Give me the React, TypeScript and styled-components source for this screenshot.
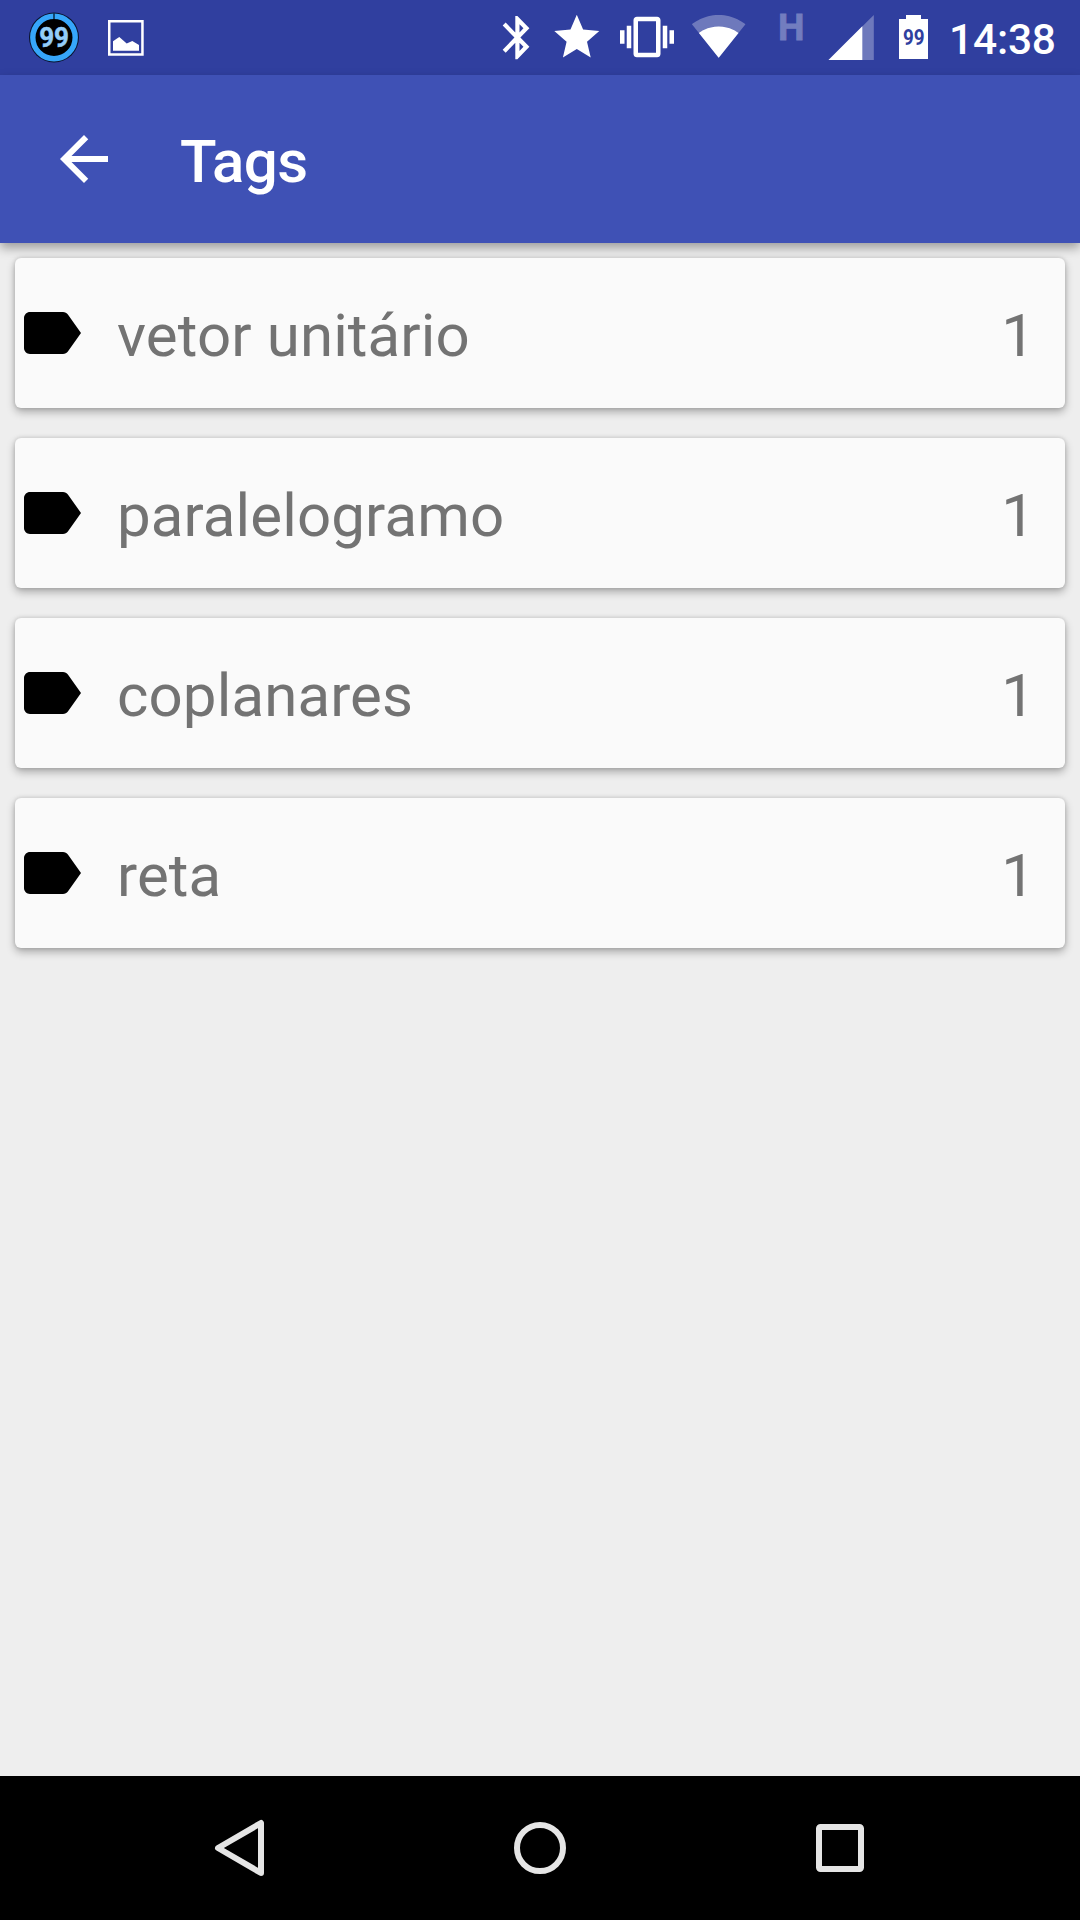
import React from "react";
import styled, { createGlobalStyle } from "styled-components";

const Global = createGlobalStyle`
  body { margin: 0; background: #eeeeee; }
  * { box-sizing: border-box; }
`;

const Screen = styled.div`
  width: 1080px;
  height: 1920px;
  display: flex;
  flex-direction: column;
  background: #eeeeee;
  font-family: Roboto, "Noto Sans", sans-serif;
  overflow: hidden;
`;

const StatusBar = styled.header`
  height: 75px;
  flex: none;
  display: flex;
  align-items: flex-start;
  background: #303f9f;
`;

const StatusIcon = styled.svg<{ $before: number }>`
  display: block;
  flex: none;
  height: 75px;
  margin-left: ${(p) => p.$before}px;
  fill: #ffffff;
`;

const NetworkType = styled.span`
  width: 28px;
  margin-left: 31px;
  padding-top: 5px;
  font-size: 37.5px;
  line-height: 44px;
  font-weight: 700;
  color: #727dbf;
  -webkit-text-stroke: 0.8px #727dbf;
`;

const Clock = styled.time`
  margin-left: 20px;
  padding-top: 15px;
  font-size: 42.5px;
  line-height: 49px;
  letter-spacing: -0.2px;
  font-weight: 500;
  color: #ffffff;
`;

const AppBar = styled.div`
  height: 168px;
  flex: none;
  display: flex;
  align-items: center;
  gap: 60px;
  padding-left: 48px;
  background: #3f51b5;
  box-shadow: 0 5px 10px rgba(0, 0, 0, 0.34);
`;

const BackButton = styled.button`
  display: block;
  width: 72px;
  height: 72px;
  padding: 0;
  border: 0;
  background: none;
`;

const Title = styled.h1`
  margin: 0;
  padding-top: 5px;
  font-size: 60px;
  line-height: 71px;
  letter-spacing: -0.6px;
  font-weight: 500;
  color: #ffffff;
`;

const TagList = styled.ul`
  flex: 1;
  display: flex;
  flex-direction: column;
  gap: 30px;
  margin: 0;
  padding: 15px;
  list-style: none;
`;

const TagCard = styled.li`
  height: 150px;
  display: flex;
  align-items: center;
  padding-right: 30px;
  border-radius: 6px;
  background: #fafafa;
  box-shadow: 0 4px 8px rgba(0, 0, 0, 0.29), 0 0 4px rgba(0, 0, 0, 0.15);
`;

const TagText = styled.span<{ $grow?: boolean }>`
  flex: ${(p) => (p.$grow ? "1" : "none")};
  margin-left: ${(p) => (p.$grow ? "30px" : "0")};
  padding-top: 5px;
  font-size: 60px;
  line-height: 71px;
  letter-spacing: ${(p) => (p.$grow ? "0.12px" : "0")};
  color: #737373;
`;

const NavBar = styled.nav`
  height: 144px;
  flex: none;
  display: flex;
  padding: 0 90px;
  background: #000000;
`;

const NavButton = styled.button`
  flex: 1;
  display: flex;
  align-items: center;
  justify-content: center;
  padding: 0;
  border: 0;
  background: none;

  svg {
    fill: none;
    stroke: #e5e5e5;
    stroke-width: 6;
    stroke-linejoin: round;
  }
`;

const tags = [
  { name: "vetor unitário", count: 1 },
  { name: "paralelogramo", count: 1 },
  { name: "coplanares", count: 1 },
  { name: "reta", count: 1 },
];

const LabelIcon = () => (
  <svg width="72" height="72" viewBox="0 0 24 24">
    <path d="M17.63 5.84C17.27 5.33 16.67 5 16 5L5 5.01C3.9 5.01 3 5.9 3 7v10c0 1.1.9 1.99 2 1.99L16 19c.67 0 1.27-.33 1.63-.84L22 12l-4.37-6.16z" />
  </svg>
);

const StatusIcons = () => (
  <>
    <StatusIcon $before={29} width="50" viewBox="29 0 50 75">
      <circle cx="54" cy="37.5" r="25" fill="#0a1430" />
      <circle cx="54" cy="37.5" r="18.8" fill="#000000" />
      <circle cx="54" cy="37.5" r="21.2" fill="none" stroke="#36a6fa" strokeWidth="5.4" />
      <path d="M54 13v6" stroke="#0d3050" strokeWidth="1.6" />
      <text x="39.2" y="47.4" fontSize="27.5" fontWeight="700" fill="#93cdf9" stroke="#93cdf9" strokeWidth="0.5" textLength="29.8" lengthAdjust="spacingAndGlyphs">99</text>
    </StatusIcon>
    <StatusIcon $before={29} width="36" viewBox="108 0 36 75">
      <path d="M109.25 21.25h33.2v33.2h-33.2z" fill="none" stroke="#ffffff" strokeWidth="2.5" />
      <path d="M113 50.7V41.2l4-2.6 2.3-1.6 7.4 6.4 5.6-2.4 6.7 4v5.7z" />
    </StatusIcon>
    <StatusIcon $before={358} width="28" viewBox="502 0 28 75">
      <path
        transform="translate(502.7 16) scale(2.1 2.16) translate(-5 -2)"
        d="M17.71 7.71L12 2h-1v7.59L6.41 5 5 6.41 10.59 12 5 17.59 6.41 19 11 14.41V22h1l5.71-5.71-4.3-4.29 4.3-4.29zM13 5.83l1.88 1.88L13 9.59V5.83zm1.88 10.46L13 18.17v-3.76l1.88 1.88z"
      />
    </StatusIcon>
    <StatusIcon $before={24} width="46" viewBox="554 0 46 75">
      <path
        transform="translate(549.8 10.2) scale(2.25)"
        d="M12 17.27L18.18 21l-1.64-7.03L22 9.24l-7.19-.61L12 2 9.19 8.63 2 9.24l5.46 4.73L5.82 21z"
      />
    </StatusIcon>
    <StatusIcon $before={20} width="54" viewBox="620 0 54 75">
      <path
        transform="translate(620 10.1) scale(2.25)"
        d="M0 15h2V9H0v6zm3 2h2V7H3v10zm19-8v6h2V9h-2zm-3 8h2V7h-2v10zM16.5 3h-9C6.67 3 6 3.67 6 4.5v15c0 .83.67 1.5 1.5 1.5h9c.83 0 1.5-.67 1.5-1.5v-15c0-.83-.67-1.5-1.5-1.5zM16 19H8V5h8v14z"
      />
    </StatusIcon>
    <StatusIcon $before={17} width="56" viewBox="691 0 56 75">
      <g transform="translate(691.1 8.2) scale(2.3)">
        <path opacity="0.3" d="M12.01 21.49L23.64 7c-.45-.34-4.93-4-11.64-4C5.28 3 .81 6.66.36 7l11.63 14.49.01.01.01-.01z" />
        <path d="M3.4 10.8L11.99 21.49l.01.01.01-.01L20.6 10.8C20.2 10.5 16.9 8 12 8S3.8 10.5 3.4 10.8z" />
      </g>
    </StatusIcon>
    <NetworkType>H</NetworkType>
    <StatusIcon $before={22} width="46" viewBox="828 0 46 75">
      <path opacity="0.3" d="M828.5 60h45.3V15z" />
      <path d="M828.5 60h33.8V26.2z" />
    </StatusIcon>
    <StatusIcon $before={25} width="30" viewBox="899 0 30 75">
      <path d="M899 59V19h7v-4h15v4h7v40z" />
      <text x="903" y="45.2" fontSize="21.5" fontWeight="700" fill="#303f9f" textLength="21.6" lengthAdjust="spacingAndGlyphs">99</text>
    </StatusIcon>
  </>
);

export default function App() {
  return (
    <>
      <Global />
      <Screen>
        <StatusBar>
          <StatusIcons />
          <Clock>14:38</Clock>
        </StatusBar>
        <AppBar>
          <BackButton aria-label="Voltar">
            <svg width="72" height="72" viewBox="0 0 24 24" fill="#ffffff" display="block">
              <path d="M20 11H7.83l5.59-5.59L12 4l-8 8 8 8 1.41-1.41L7.83 13H20v-2z" />
            </svg>
          </BackButton>
          <Title>Tags</Title>
        </AppBar>
        <TagList>
          {tags.map((tag) => (
            <TagCard key={tag.name}>
              <LabelIcon />
              <TagText $grow>{tag.name}</TagText>
              <TagText>{tag.count}</TagText>
            </TagCard>
          ))}
        </TagList>
        <NavBar>
          <NavButton aria-label="Back">
            <svg width="60" height="60" viewBox="0 0 60 60">
              <path d="M8 30L51 5v50z" />
            </svg>
          </NavButton>
          <NavButton aria-label="Home">
            <svg width="60" height="60" viewBox="0 0 60 60">
              <circle cx="30" cy="30" r="23" />
            </svg>
          </NavButton>
          <NavButton aria-label="Recents">
            <svg width="60" height="60" viewBox="0 0 60 60">
              <rect x="9" y="9" width="42" height="42" rx="1.5" />
            </svg>
          </NavButton>
        </NavBar>
      </Screen>
    </>
  );
}
